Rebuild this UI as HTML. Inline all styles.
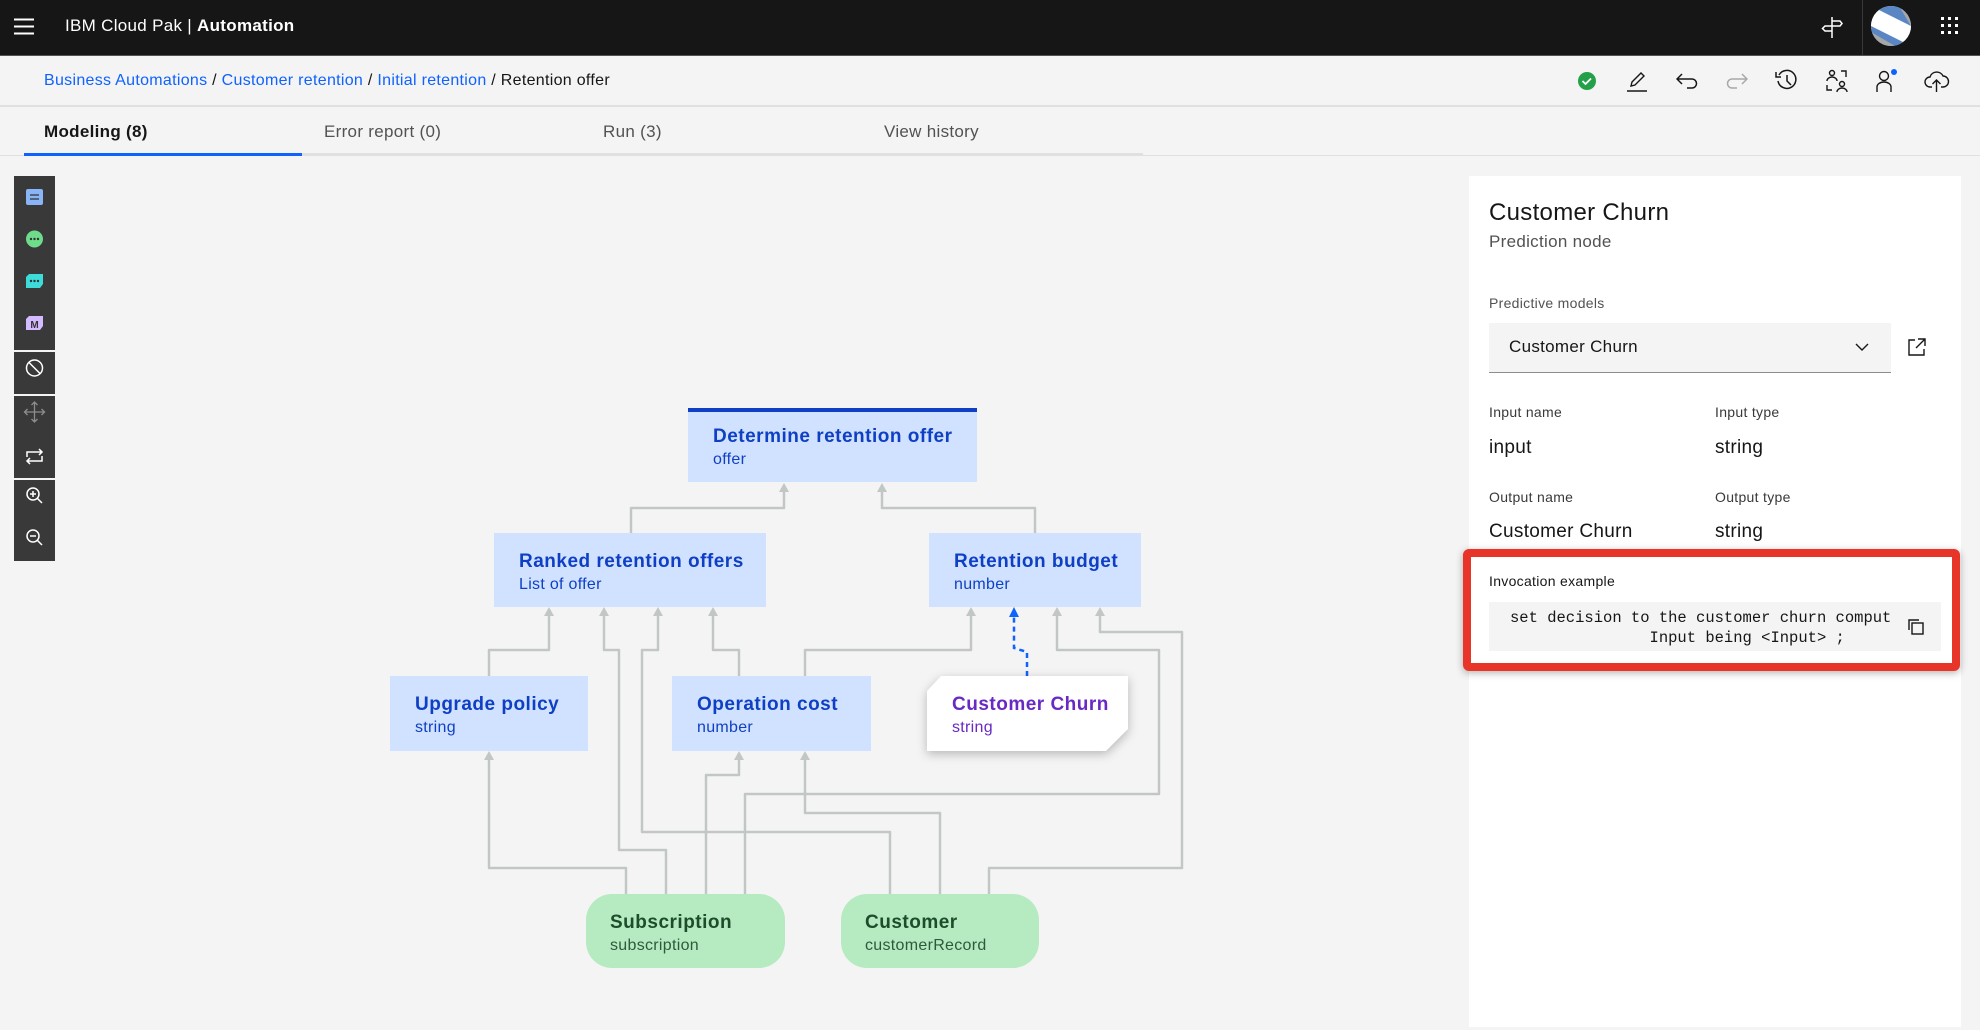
<!DOCTYPE html>
<html><head><meta charset="utf-8"><style>
*{margin:0;padding:0;box-sizing:border-box}
body{width:1980px;height:1030px;overflow:hidden;background:#f4f4f4;font-family:"Liberation Sans",sans-serif;position:relative;color:#161616}
.a{position:absolute}
.hdr{left:0;top:0;width:1980px;height:56px;background:#161616;border-bottom:1px solid #525252}
.crumb{left:44px;top:72px;font-size:16px;letter-spacing:0.3px;color:#161616;white-space:nowrap}
.crumb a{color:#0f62fe;text-decoration:none}
.tab{top:122px;font-size:17px;letter-spacing:0.3px;color:#525252}
.node{position:absolute;background:#d0e2ff;color:#0f3fc4;padding-left:25px}
.node b{display:block;font-size:19px;letter-spacing:0.5px;margin-top:18px;font-weight:bold}
.node span{display:block;font-size:16px;letter-spacing:0.3px;margin-top:3px}
.gnode{position:absolute;background:#b6ebc1;color:#1e4d2b;border-radius:26px;padding-left:24px}
.gnode b{display:block;font-size:19px;letter-spacing:0.5px;margin-top:18px}
.gnode span{display:block;font-size:16px;letter-spacing:0.3px;margin-top:3px;color:#2d5a3a}
.tb{left:14px;width:41px;background:#393939}
.lbl{font-size:14px;letter-spacing:0.3px;color:#393939}
.val{font-size:19px;letter-spacing:0.3px;color:#161616}
</style></head><body>
<div class="a hdr"></div>
<svg class="a" style="left:14px;top:18px" width="22" height="18"><path d="M0 1.5H20M0 8.5H20M0 15.5H20" stroke="#fff" stroke-width="2"/></svg>
<div class="a" style="left:65px;top:16px;font-size:17px;letter-spacing:0.3px;color:#fff;white-space:nowrap">IBM Cloud Pak | <b>Automation</b></div>
<svg class="a" style="left:1819px;top:14px" width="26" height="26" viewBox="0 0 26 26" fill="none" stroke="#fff" stroke-width="1.5"><path d="M13 3V24M13 7H21L23 9.5L21 12H13M13 12H6L3.5 14.5L6 17H13"/></svg>
<div class="a" style="left:1862px;top:0;width:1px;height:55px;background:#393939"></div>
<svg class="a" style="left:1871px;top:6px" width="40" height="40" viewBox="0 0 40 40"><defs><clipPath id="c"><circle cx="20" cy="20" r="20"/></clipPath></defs><g clip-path="url(#c)"><rect width="40" height="40" fill="#fff"/><path d="M0 0H40V40Z" fill="#5a87c4"/><path d="M28 0H40V20Z" fill="#a8a8a8"/><path d="M0 20H40L40 20Z"/><path d="M0 0L40 20H0Z" fill="#fff"/><path d="M0 20H40V40Z" fill="#fff"/><path d="M0 20L40 40H0Z" fill="#5a87c4"/><path d="M0 26L24 40H0Z" fill="#a8a8a8"/></g></svg>
<svg class="a" style="left:1940px;top:16px" width="20" height="20"><g fill="#fff"><rect x="1" y="1" width="3" height="3"/><rect x="8" y="1" width="3" height="3"/><rect x="15" y="1" width="3" height="3"/><rect x="1" y="8" width="3" height="3"/><rect x="8" y="8" width="3" height="3"/><rect x="15" y="8" width="3" height="3"/><rect x="1" y="15" width="3" height="3"/><rect x="8" y="15" width="3" height="3"/><rect x="15" y="15" width="3" height="3"/></g></svg>

<div class="a crumb"><a>Business Automations</a> / <a>Customer retention</a> / <a>Initial retention</a> / Retention offer</div>
<div class="a" style="left:0;top:105px;width:1980px;height:2px;background:#e0e0e0"></div>
<svg class="a" style="left:1577px;top:71px" width="20" height="20"><circle cx="10" cy="10" r="9" fill="#24a148"/><path d="M5.5 10L8.5 13L14 7.5" stroke="#fff" stroke-width="1.8" fill="none"/></svg>
<svg class="a" style="left:1626px;top:70px" width="22" height="22" fill="none" stroke="#161616" stroke-width="1.4"><path d="M1 21H21M5 16L6 12L15 3L18 6L9 15Z"/></svg>
<svg class="a" style="left:1676px;top:72px" width="22" height="18" fill="none" stroke="#161616" stroke-width="1.5"><path d="M6 2L1 7L6 12M1 7H16A4.5 4.5 0 0 1 16 16H11"/></svg>
<svg class="a" style="left:1726px;top:72px" width="22" height="18" fill="none" stroke="#a8a8a8" stroke-width="1.5"><path d="M16 2L21 7L16 12M21 7H6A4.5 4.5 0 0 0 6 16H11"/></svg>
<svg class="a" style="left:1775px;top:69px" width="24" height="24" fill="none" stroke="#161616" stroke-width="1.5"><path d="M4 6A9 9 0 1 1 3 12M1 3V8H6M12 6V12L16 16"/></svg>
<svg class="a" style="left:1825px;top:69px" width="24" height="24" fill="none" stroke="#161616" stroke-width="1.4"><circle cx="7" cy="4" r="2.5"/><path d="M2 12A5 4 0 0 1 12 12"/><circle cx="17" cy="15" r="2.5"/><path d="M12 23A5 4 0 0 1 22 23M16 2H21V8M2 16V21H7"/></svg>
<svg class="a" style="left:1874px;top:68px" width="26" height="26" fill="none" stroke="#161616" stroke-width="1.4"><circle cx="10" cy="8" r="4.5"/><path d="M3 24V19A7 5 0 0 1 17 19V24"/><circle cx="20" cy="4" r="3" fill="#0f62fe" stroke="none"/></svg>
<svg class="a" style="left:1924px;top:69px" width="26" height="24" fill="none" stroke="#161616" stroke-width="1.4"><path d="M8 18H6A5 5 0 0 1 6 8A7 7 0 0 1 19 7A5.5 5.5 0 0 1 19 18H17M12.5 23V11M8.5 15L12.5 11L16.5 15"/></svg>

<div class="a tab" style="left:44px;color:#161616;font-weight:bold">Modeling (8)</div>
<div class="a tab" style="left:324px">Error report (0)</div>
<div class="a tab" style="left:603px">Run (3)</div>
<div class="a tab" style="left:884px">View history</div>
<div class="a" style="left:0;top:155px;width:1980px;height:1px;background:#e0e0e0"></div>
<div class="a" style="left:24px;top:153px;width:1119px;height:3px;background:#e0e0e0"></div>
<div class="a" style="left:24px;top:153px;width:278px;height:3px;background:#0f62fe"></div>

<div class="a tb" style="top:176px;height:174px"></div>
<div class="a tb" style="top:352px;height:42px"></div>
<div class="a tb" style="top:396px;height:82px"></div>
<div class="a tb" style="top:480px;height:81px"></div>
<svg class="a" style="left:14px;top:176px" width="41" height="385" viewBox="0 0 41 385">
<rect x="12" y="13" width="17" height="16" rx="2" fill="#8ab4f8"/><path d="M16 19H25M16 23H25" stroke="#333" stroke-width="1.3"/>
<circle cx="20.5" cy="63" r="8.5" fill="#6fdc8c"/><g fill="#333"><circle cx="17" cy="63" r="1.2"/><circle cx="20.5" cy="63" r="1.2"/><circle cx="24" cy="63" r="1.2"/></g>
<path d="M15 98H29V108L26 112H12V101Z" fill="#3ddbd9"/><g fill="#333"><circle cx="17" cy="105" r="1.2"/><circle cx="20.5" cy="105" r="1.2"/><circle cx="24" cy="105" r="1.2"/></g>
<path d="M15 140H29V150L26 154H12V143Z" fill="#d4bbff"/><text x="20.5" y="152" font-size="10" text-anchor="middle" fill="#333" font-family="Liberation Sans" font-weight="bold">M</text>
<g fill="none" stroke="#fff" stroke-width="1.5"><circle cx="20.5" cy="192" r="8"/><path d="M15 186.5L26 197.5"/></g>
<g fill="none" stroke="#8d8d8d" stroke-width="1.3"><path d="M20.5 226V246M10.5 236H30.5M17.5 229L20.5 226L23.5 229M17.5 243L20.5 246L23.5 243M13.5 233L10.5 236L13.5 239M27.5 233L30.5 236L27.5 239"/></g>
<g fill="none" stroke="#fff" stroke-width="1.5"><path d="M13 281V276H28M25 273L28 276L25 279M28 280V285H13M16 282L13 285L16 288"/></g>
<g fill="none" stroke="#fff" stroke-width="1.5"><circle cx="19" cy="318" r="6"/><path d="M23.5 322.5L28 327M16 318H22M19 315V321"/><circle cx="19" cy="360" r="6"/><path d="M23.5 364.5L28 369M16 360H22"/></g>
</svg>

<svg class="a" style="left:0;top:0" width="1460" height="1030">
<g fill="none" stroke="#c1c7c5" stroke-width="2.5" stroke-linejoin="round">
<polyline points="631,533 631,508 784,508 784,488"/>
<polyline points="1035,533 1035,508 882,508 882,488"/>
<polyline points="489,676 489,650 549,650 549,612"/>
<polyline points="666,894 666,850 619,850 619,650 604,650 604,612"/>
<polyline points="890,894 890,832 642,832 642,650 658,650 658,612"/>
<polyline points="739,676 739,650 713,650 713,612"/>
<polyline points="805,676 805,650 971,650 971,612"/>
<polyline points="745,894 745,794 1159,794 1159,650 1057,650 1057,612"/>
<polyline points="989,894 989,868 1182,868 1182,632 1100,632 1100,612"/>
<polyline points="626,894 626,868 489,868 489,756"/>
<polyline points="706,894 706,775 739,775 739,756"/>
<polyline points="940,894 940,813 805,813 805,756"/>
</g>
<g fill="#c1c7c5">
<path d="M784,483l-5,9h10z"/><path d="M882,483l-5,9h10z"/>
<path d="M549,607l-5,9h10z"/><path d="M604,607l-5,9h10z"/><path d="M658,607l-5,9h10z"/><path d="M713,607l-5,9h10z"/>
<path d="M971,607l-5,9h10z"/><path d="M1057,607l-5,9h10z"/><path d="M1100,607l-5,9h10z"/>
<path d="M489,751l-5,9h10z"/><path d="M739,751l-5,9h10z"/><path d="M805,751l-5,9h10z"/>
</g>
<polyline points="1027,676 1027,652 1014,648 1014,616" fill="none" stroke="#0f62fe" stroke-width="2.5" stroke-dasharray="5,4"/>
<path d="M1014,607l-5,10h10z" fill="#0f62fe"/>
<path d="M941,676H1128V729L1106,751H927V691Z" fill="#fff" style="filter:drop-shadow(0 3px 5px rgba(0,0,0,.25))"/>
</svg>

<div class="node" style="left:688px;top:408px;width:289px;height:74px;border-top:4px solid #0f3fc4"><b style="margin-top:14px">Determine retention offer</b><span>offer</span></div>
<div class="node" style="left:494px;top:533px;width:272px;height:74px"><b>Ranked retention offers</b><span>List of offer</span></div>
<div class="node" style="left:929px;top:533px;width:212px;height:74px"><b>Retention budget</b><span>number</span></div>
<div class="node" style="left:390px;top:676px;width:198px;height:75px"><b>Upgrade policy</b><span>string</span></div>
<div class="node" style="left:672px;top:676px;width:199px;height:75px"><b>Operation cost</b><span>number</span></div>
<div class="node" style="left:927px;top:676px;width:201px;height:75px;background:transparent;color:#6929c4"><b>Customer Churn</b><span>string</span></div>
<div class="gnode" style="left:586px;top:894px;width:199px;height:74px"><b>Subscription</b><span>subscription</span></div>
<div class="gnode" style="left:841px;top:894px;width:198px;height:74px"><b>Customer</b><span>customerRecord</span></div>

<div class="a" style="left:1469px;top:176px;width:492px;height:851px;background:#fff"></div>
<div class="a" style="left:1489px;top:199px;font-size:24px;letter-spacing:0.3px">Customer Churn</div>
<div class="a" style="left:1489px;top:232px;font-size:17px;letter-spacing:0.3px;color:#525252">Prediction node</div>
<div class="a lbl" style="left:1489px;top:295px;color:#525252">Predictive models</div>
<div class="a" style="left:1489px;top:323px;width:402px;height:50px;background:#f4f4f4;border-bottom:1px solid #8d8d8d"></div>
<div class="a" style="left:1509px;top:337px;font-size:17px;letter-spacing:0.3px">Customer Churn</div>
<svg class="a" style="left:1854px;top:341px" width="16" height="12"><path d="M2 3L8 9L14 3" stroke="#161616" stroke-width="1.4" fill="none"/></svg>
<svg class="a" style="left:1907px;top:337px" width="20" height="20" fill="none" stroke="#161616" stroke-width="1.4"><path d="M8 3H2V18H17V12M11 2H18V9M18 2L9 11"/></svg>
<div class="a lbl" style="left:1489px;top:404px">Input name</div>
<div class="a lbl" style="left:1715px;top:404px">Input type</div>
<div class="a val" style="left:1489px;top:437px">input</div>
<div class="a val" style="left:1715px;top:437px">string</div>
<div class="a lbl" style="left:1489px;top:489px">Output name</div>
<div class="a lbl" style="left:1715px;top:489px">Output type</div>
<div class="a val" style="left:1489px;top:521px">Customer Churn</div>
<div class="a val" style="left:1715px;top:521px">string</div>
<div class="a" style="left:1463px;top:549px;width:497px;height:122px;border:8px solid #e8352a;border-radius:6px;box-shadow:0 2px 8px rgba(0,0,0,.3)"></div>
<div class="a lbl" style="left:1489px;top:573px;color:#161616">Invocation example</div>
<div class="a" style="left:1489px;top:602px;width:452px;height:49px;background:#f4f4f4"></div>
<div class="a" style="left:1510px;top:608px;width:382px;overflow:hidden;font-family:'Liberation Mono',monospace;font-size:15.5px;line-height:20px;white-space:pre;color:#161616">set decision to the customer churn comput
               Input being &lt;Input&gt; ;</div>
<svg class="a" style="left:1907px;top:618px" width="18" height="18" fill="none" stroke="#161616" stroke-width="1.4"><path d="M2 12V2H12"/><rect x="5" y="5" width="11" height="11"/></svg>
</body></html>
